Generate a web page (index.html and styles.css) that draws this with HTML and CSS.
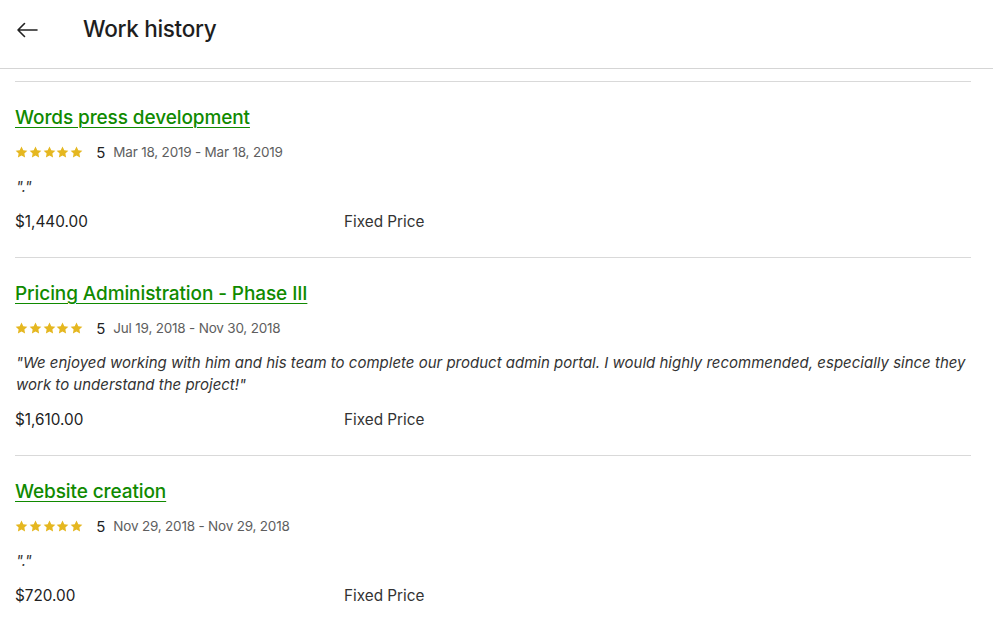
FILE: index.html
```html
<!DOCTYPE html>
<html>
<head>
<meta charset="utf-8">
<link rel="stylesheet" href="styles.css">
</head>
<body>
<header class="topbar">
  <span class="back">
    <svg width="22" height="16" viewBox="0 0 22 16"><path d="M21 8H2M8.5 1.5L2 8l6.5 6.5" fill="none" stroke="#222" stroke-width="1.6" stroke-linecap="round" stroke-linejoin="round"/></svg>
  </span>
  <h1 class="title">Work history</h1>
</header>
<main class="list">
  <section class="job">
    <a class="job-title" href="#">Words press development</a>
    <div class="rating">
      <span class="stars"></span>
      <span class="score">5</span>
      <span class="dates">Mar 18, 2019 - Mar 18, 2019</span>
    </div>
    <p class="quote">"."</p>
    <div class="price-row"><span class="amount">$1,440.00</span><span class="type">Fixed Price</span></div>
  </section>
  <section class="job">
    <a class="job-title" href="#">Pricing Administration - Phase III</a>
    <div class="rating">
      <span class="stars"></span>
      <span class="score">5</span>
      <span class="dates">Jul 19, 2018 - Nov 30, 2018</span>
    </div>
    <p class="quote">"We enjoyed working with him and his team to complete our product admin portal. I would highly recommended, especially since they work to understand the project!"</p>
    <div class="price-row"><span class="amount">$1,610.00</span><span class="type">Fixed Price</span></div>
  </section>
  <section class="job">
    <a class="job-title" href="#">Website creation</a>
    <div class="rating">
      <span class="stars"></span>
      <span class="score">5</span>
      <span class="dates">Nov 29, 2018 - Nov 29, 2018</span>
    </div>
    <p class="quote">"."</p>
    <div class="price-row"><span class="amount">$720.00</span><span class="type">Fixed Price</span></div>
  </section>
</main>
<script>
document.querySelectorAll('.stars').forEach(function (s) {
  var star = '<svg width="13" height="12" viewBox="0 0 24 23"><path d="M12 0.8l3.4 7.2 7.8 1-5.7 5.4 1.4 7.8L12 18.4l-6.9 3.8 1.4-7.8L0.8 9l7.8-1z" fill="#e5b720"/></svg>';
  s.innerHTML = star + star + star + star + star;
});
</script>
</body>
</html>
```

FILE: styles.css
```css
* { box-sizing: border-box; }
html, body { margin: 0; padding: 0; background: #fff; }
body {
  font-family: Inter, "Noto Sans", "Liberation Sans", sans-serif;
  color: #222;
}
.topbar {
  display: flex;
  align-items: center;
  height: 69px;
  padding: 0 0 0 16px;
  border-bottom: 1px solid #d5d5d5;
  margin-right: 1px;
}
.back { display: flex; width: 22px; height: 16px; margin-top: -9px; }
.title {
  margin: 0 0 0 45px;
  margin-top: -11px;
  font-size: 22.5px;
  font-weight: 500;
  letter-spacing: -0.3px;
  color: #1e1e1e;
}
.list {
  margin: 12px 23px 0 15px;
}
.job {
  border-top: 1px solid #d9d9d9;
  padding: 23px 0 24px 0;
}
.job-title {
  display: inline-block;
  font-size: 19px;
  font-weight: 500;
  color: #108a00;
  text-decoration: underline;
  text-decoration-thickness: 1px;
  text-underline-offset: 3px;
  line-height: 26px;
  letter-spacing: -0.1px;
}
.rating {
  display: flex;
  align-items: center;
  margin-top: 12px;
  height: 18px;
}
.stars { display: flex; gap: 0.8px; }
.stars svg { display: block; }
.score {
  margin-left: 13px;
  font-size: 15px;
  color: #222;
}
.dates {
  margin-left: 8px;
  font-size: 13.5px;
  color: #5e5e5e;
  letter-spacing: -0.2px;
}
.quote {
  margin: 15px 0 0 0;
  font-size: 15px;
  font-style: italic;
  line-height: 22px;
  color: #333;
  padding-left: 1px;
}
.price-row {
  display: flex;
  margin-top: 13px;
  font-size: 15.3px;
  line-height: 22px;
  color: #222;
}
.amount { width: 329px; }
.type { color: #333; }
```
